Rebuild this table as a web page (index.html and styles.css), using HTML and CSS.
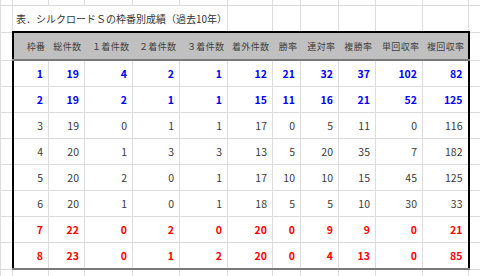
FILE: index.html
```html
<!DOCTYPE html>
<html lang="ja">
<head>
<meta charset="utf-8">
<link rel="stylesheet" href="styles.css">
</head>
<body>
<table class="sheet">
  <colgroup>
    <col class="w12"><col class="w36"><col class="w36"><col class="w48"><col class="w47"><col class="w48"><col class="w45"><col class="w28"><col class="w38"><col class="w37"><col class="w47"><col class="w46"><col class="w12">
  </colgroup>
  <tr class="r-top"><td></td><td></td><td></td><td></td><td></td><td></td><td></td><td></td><td></td><td></td><td></td><td></td><td></td></tr>
  <tr class="r-title"><td></td><td class="title" colspan="5">表．シルクロードＳの枠番別成績（過去10年）</td><td></td><td></td><td></td><td></td><td></td><td></td><td></td></tr>
  <tr class="r-head">
    <td></td>
    <th class="first">枠番</th><th>総件数</th><th>１着件数</th><th>２着件数</th><th>３着件数</th><th>着外件数</th><th>勝率</th><th>連対率</th><th>複勝率</th><th>単回収率</th><th class="last">複回収率</th>
    <td></td>
  </tr>
  <tr class="r-data blue"><td></td><td class="n first">1</td><td class="n">19</td><td class="n">4</td><td class="n">2</td><td class="n">1</td><td class="n">12</td><td class="n">21</td><td class="n">32</td><td class="n">37</td><td class="n">102</td><td class="n last">82</td><td></td></tr>
  <tr class="r-data blue"><td></td><td class="n first">2</td><td class="n">19</td><td class="n">2</td><td class="n">1</td><td class="n">1</td><td class="n">15</td><td class="n">11</td><td class="n">16</td><td class="n">21</td><td class="n">52</td><td class="n last">125</td><td></td></tr>
  <tr class="r-data"><td></td><td class="n first">3</td><td class="n">19</td><td class="n">0</td><td class="n">1</td><td class="n">1</td><td class="n">17</td><td class="n">0</td><td class="n">5</td><td class="n">11</td><td class="n">0</td><td class="n last">116</td><td></td></tr>
  <tr class="r-data"><td></td><td class="n first">4</td><td class="n">20</td><td class="n">1</td><td class="n">3</td><td class="n">3</td><td class="n">13</td><td class="n">5</td><td class="n">20</td><td class="n">35</td><td class="n">7</td><td class="n last">182</td><td></td></tr>
  <tr class="r-data"><td></td><td class="n first">5</td><td class="n">20</td><td class="n">2</td><td class="n">0</td><td class="n">1</td><td class="n">17</td><td class="n">10</td><td class="n">10</td><td class="n">15</td><td class="n">45</td><td class="n last">125</td><td></td></tr>
  <tr class="r-data"><td></td><td class="n first">6</td><td class="n">20</td><td class="n">1</td><td class="n">0</td><td class="n">1</td><td class="n">18</td><td class="n">5</td><td class="n">5</td><td class="n">10</td><td class="n">30</td><td class="n last">33</td><td></td></tr>
  <tr class="r-data red"><td></td><td class="n first">7</td><td class="n">22</td><td class="n">0</td><td class="n">2</td><td class="n">0</td><td class="n">20</td><td class="n">0</td><td class="n">9</td><td class="n">9</td><td class="n">0</td><td class="n last">21</td><td></td></tr>
  <tr class="r-data red r-end"><td></td><td class="n first">8</td><td class="n">23</td><td class="n">0</td><td class="n">1</td><td class="n">2</td><td class="n">20</td><td class="n">0</td><td class="n">4</td><td class="n">13</td><td class="n">0</td><td class="n last">85</td><td></td></tr>
  <tr class="r-tail"><td></td><td></td><td></td><td></td><td></td><td></td><td></td><td></td><td></td><td></td><td></td><td></td><td></td></tr>
</table>
</body>
</html>
```

FILE: styles.css
```css
html, body {
  margin: 0;
  padding: 0;
  background: #ffffff;
  overflow: hidden;
}

.sheet {
  border-collapse: collapse;
  table-layout: fixed;
  width: 480px;
  font-family: "Noto Sans CJK JP", "Noto Sans", sans-serif;
  color: #3a3a3a;
}

.w12 { width: 12px; }
.w28 { width: 28px; }
.w36 { width: 36px; }
.w37 { width: 37px; }
.w38 { width: 38px; }
.w45 { width: 45px; }
.w46 { width: 46px; }
.w47 { width: 47px; }
.w48 { width: 48px; }

.sheet td,
.sheet th {
  border: 1px solid #dcdcdc;
  padding: 0;
  overflow: visible;
  white-space: nowrap;
}

.r-top td { height: 5px; border-top: none; }
.r-title td { height: 25px; }
.r-tail td { height: 12px; border-bottom: none; }

.title {
  font-size: 10px;
  padding-left: 3px !important;
  color: #333333;
  text-align: left;
  vertical-align: middle;
  border-left: 1px solid #dcdcdc;
  border-right: none !important;
  line-height: 12px;
}

.r-head th {
  height: 26px;
  background: #c0c0c0;
  font-weight: normal;
  font-size: 9px;
  color: #404040;
  text-align: right;
  padding-right: 3px;
  border-top: 2px solid #000000;
  border-bottom: 2px solid #7a7a7a;
  border-left: none;
  border-right: none;
  letter-spacing: 0.4px;
}

.r-head th.first { border-left: 2px solid #000000; }
.r-head th.last { border-right: 2px solid #000000; }

.r-data td { height: 25px; }

.n {
  font-family: "Noto Sans CJK JP", "Liberation Sans", sans-serif;
  font-size: 10.5px;
  text-align: right;
  padding-right: 5px !important;
  color: #3a3a3a;
}

.blue .n { color: #0000ff; font-weight: bold; }
.red .n { color: #ff0000; font-weight: bold; }

.sheet td.first { border-left: 2px solid #000000; }
.sheet td.last { border-right: 2px solid #000000; }
.r-end td.n { border-bottom: 2px solid #7a7a7a; }
```
